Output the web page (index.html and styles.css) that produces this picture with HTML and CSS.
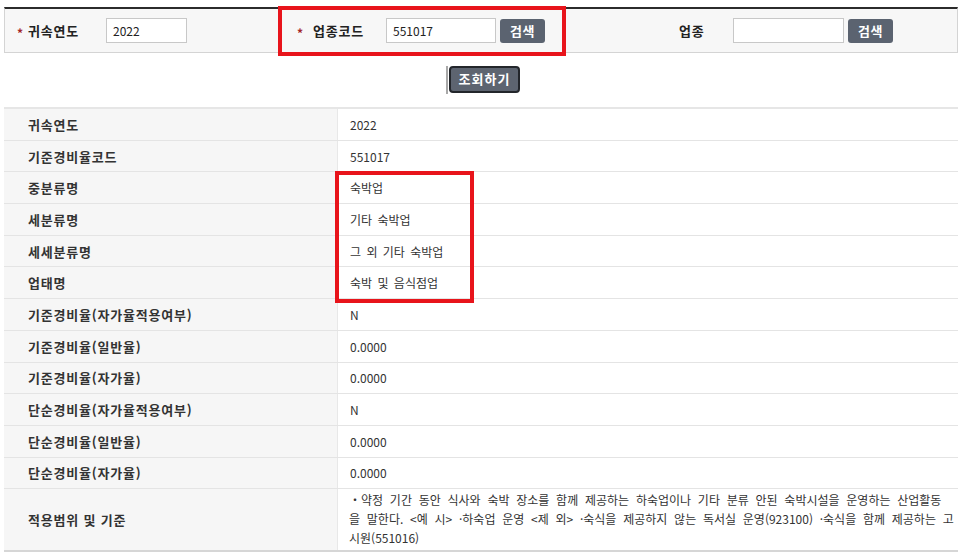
FILE: index.html
```html
<!DOCTYPE html>
<html lang="ko">
<head>
<meta charset="utf-8">
<link rel="stylesheet" href="styles.css">
</head>
<body>
<div class="page">
  <div class="search">
    <div class="grp g1">
      <span class="req">*</span><span class="lbl">귀속연도</span>
      <div class="inp w81">2022</div>
    </div>
    <div class="grp g2">
      <span class="req">*</span><span class="lbl">업종코드</span>
      <div class="inp w110">551017</div>
      <div class="btn">검색</div>
    </div>
    <div class="grp g3">
      <span class="lbl">업종</span>
      <div class="inp w111"></div>
      <div class="btn">검색</div>
    </div>
    <div class="mark mark-top"></div>
  </div>
  <div class="actions">
    <div class="query"><span class="qbtn">조회하기</span></div>
  </div>
  <div class="table">
    <div class="row"><div class="th">귀속연도</div><div class="td">2022</div></div>
    <div class="row"><div class="th">기준경비율코드</div><div class="td">551017</div></div>
    <div class="row"><div class="th">중분류명</div><div class="td">숙박업</div></div>
    <div class="row"><div class="th">세분류명</div><div class="td">기타 숙박업</div></div>
    <div class="row"><div class="th">세세분류명</div><div class="td">그 외 기타 숙박업</div></div>
    <div class="row"><div class="th">업태명</div><div class="td">숙박 및 음식점업</div></div>
    <div class="row"><div class="th">기준경비율(자가율적용여부)</div><div class="td">N</div></div>
    <div class="row"><div class="th">기준경비율(일반율)</div><div class="td">0.0000</div></div>
    <div class="row"><div class="th">기준경비율(자가율)</div><div class="td">0.0000</div></div>
    <div class="row"><div class="th">단순경비율(자가율적용여부)</div><div class="td">N</div></div>
    <div class="row"><div class="th">단순경비율(일반율)</div><div class="td">0.0000</div></div>
    <div class="row"><div class="th">단순경비율(자가율)</div><div class="td">0.0000</div></div>
    <div class="row tall"><div class="th">적용범위 및 기준</div><div class="td long">・약정 기간 동안 식사와 숙박 장소를 함께 제공하는 하숙업이나 기타 분류 안된 숙박시설을 운영하는 산업활동<br>을 말한다. &lt;예 시&gt; ·하숙업 운영 &lt;제 외&gt; ·숙식을 제공하지 않는 독서실 운영(923100) ·숙식을 함께 제공하는 고<br>시원(551016)</div></div>
    <div class="mark mark-table"></div>
  </div>
</div>
</body>
</html>
```

FILE: styles.css
```css
* { box-sizing: border-box; }
html, body { margin: 0; padding: 0; background: #fff; }
body {
  font-family: "Noto Sans CJK KR", "Noto Sans", sans-serif;
  color: #333;
  font-size: 12px;
}
.page { padding-left: 4px; width: 962px; }
.search {
  position: relative;
  margin-top: 7px;
  width: 954px;
  height: 46px;
  background: #f7f7f7;
  border-top: 2px solid #2b2b2b;
  border-left: 1px solid #d4d4d4;
  border-right: 1px solid #d4d4d4;
  border-bottom: 1px solid #d4d4d4;
  display: flex;
  align-items: center;
}
.grp { display: flex; align-items: center; height: 100%; }
.g1 { padding-left: 12px; width: 291px; }
.g2 { width: 383px; }
.g3 { padding-left: 0; }
.req { color: #a3262a; font-weight: 700; font-size: 12px; width: 11px; margin-top: 3px; }
.lbl { font-weight: 700; font-size: 13px; color: #222; letter-spacing: 0.8px; }
.g1 .lbl { width: 78px; }
.g2 .lbl { width: 73px; }
.g3 .lbl { width: 54px; }
.g2 .req { width: 16px; margin-left: 1px; }
.inp {
  height: 25px;
  background: #fff;
  border: 1px solid #c8c8c8;
  padding-left: 6px;
  line-height: 23px;
  font-size: 12px;
  color: #222;
}
.w81 { width: 81px; }
.w110 { width: 110px; }
.w111 { width: 111px; }
.btn {
  margin-left: 4px;
  width: 45px;
  height: 24px;
  background: #5b6370;
  border-radius: 3px;
  color: #fff;
  font-weight: 700;
  font-size: 13px;
  text-align: center;
  line-height: 24px;
  letter-spacing: 0.5px;
}
.mark {
  position: absolute;
  border: 4px solid #e8141b;
  pointer-events: none;
}
.mark-top { left: 273px; top: -3px; width: 288px; height: 50px; }
.actions {
  width: 954px;
  height: 54px;
  display: flex;
  justify-content: center;
  align-items: flex-start;
  padding-top: 13px;
}
.query {
  border-left: 2px solid #a8a8a8;
  padding-left: 1px;
  margin-left: 4px;
  height: 28px;
  display: flex;
}
.qbtn {
  display: block;
  width: 71px;
  height: 27px;
  background: #5d6470;
  border: 2px solid #23262b;
  border-radius: 4px;
  color: #fff;
  font-weight: 700;
  font-size: 13px;
  text-align: center;
  line-height: 22px;
  letter-spacing: 1px;
}
.table {
  position: relative;
  width: 954px;
  border-top: 2px solid #e6e6e6;
}
.row {
  display: grid;
  grid-template-columns: 334px 1fr;
  height: 31.7px;
  border-bottom: 1px solid #e4e4e4;
}
.th {
  background: #f6f6f6;
  font-weight: 700;
  font-size: 13px;
  color: #333;
  padding-left: 24px;
  display: flex;
  align-items: center;
  border-right: 1px solid #e8e8e8;
  letter-spacing: 0.8px;
}
.td {
  padding-left: 12px;
  display: flex;
  align-items: center;
  font-size: 12px;
  color: #333;
  word-spacing: 2px;
}
.row.tall { height: 63px; border-bottom: 2px solid #d6d6d6; }
.long {
  display: block;
  padding: 1px 0 0 11px;
  line-height: 19px;
  word-spacing: 3.4px;
  white-space: nowrap;
}
.mark-table { left: 331px; top: 62px; width: 139px; height: 132px; }
```
